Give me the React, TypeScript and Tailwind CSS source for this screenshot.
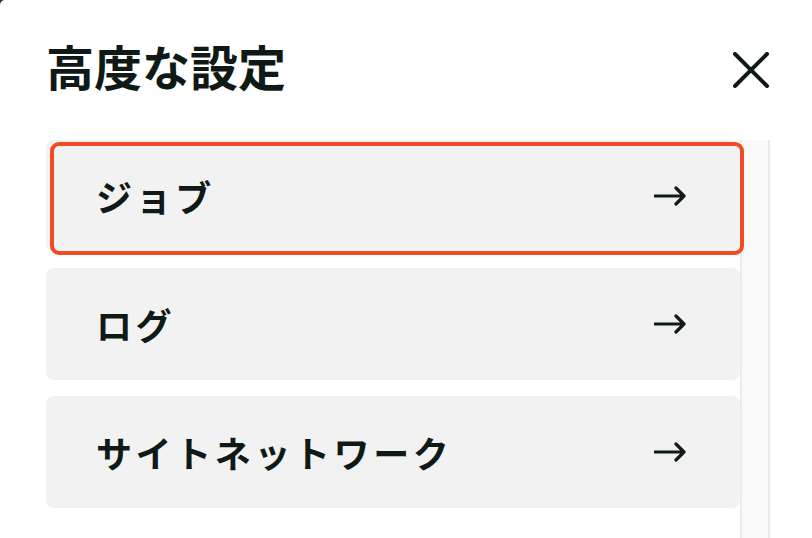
const items = [
  { id: 'jobs', label: 'ジョブ' },
  { id: 'logs', label: 'ログ' },
  { id: 'network', label: 'サイトネットワーク' },
];

const font = { fontFamily: '"Noto Sans CJK JP", "Noto Sans", sans-serif' };

const CloseIcon = () => (
  <svg width="36" height="36" viewBox="0 0 36 36" fill="none">
    <path d="M2 2 L34 34 M34 2 L2 34" stroke="#0f1a17" strokeWidth="4" strokeLinecap="round" />
  </svg>
);

const ArrowIcon = () => (
  <svg width="32" height="20" viewBox="0 0 32 20" fill="none">
    <path d="M1 10 H30 M22 2 L30 10 L22 18" stroke="#0f1a17" strokeWidth="3.2" strokeLinecap="round" strokeLinejoin="round" />
  </svg>
);

export default function App() {
  return (
    <div className="w-[812px] h-[538px] bg-[#2a2f33] overflow-hidden" style={font}>
      <div className="w-full h-full bg-white rounded-tl-[5px] flex flex-col">
        <header className="h-[140px] shrink-0 flex items-center justify-between pl-[46px] pr-[43px]">
          <h1 className="text-[48px] font-bold text-[#0f1a17] leading-none -mt-[10px]">高度な設定</h1>
          <button className="p-0">
            <CloseIcon />
          </button>
        </header>

        <div className="flex flex-1 min-h-0 pl-[46px]">
          <div className="w-[694px] flex flex-col gap-4">
            {items.map((item, i) => (
              <div key={item.id} className="relative">
                <button className="w-full h-[112px] rounded-lg bg-[#f2f2f2] flex items-center justify-between pl-[50px] pr-[54px] text-left">
                  <span className="text-[36px] font-bold text-[#0f1a17] tracking-[0.1em] leading-none">
                    {item.label}
                  </span>
                  <ArrowIcon />
                </button>
                {i === 0 && (
                  <div className="absolute left-[4px] top-[2px] w-[694px] h-[113px] border-[4px] border-[#f24a22] rounded-[9px] pointer-events-none" />
                )}
              </div>
            ))}
          </div>
          <div className="w-[30px] bg-[#fafafa] border-l-2 border-r-2 border-[#ebebeb]" />
        </div>
      </div>
    </div>
  );
}
